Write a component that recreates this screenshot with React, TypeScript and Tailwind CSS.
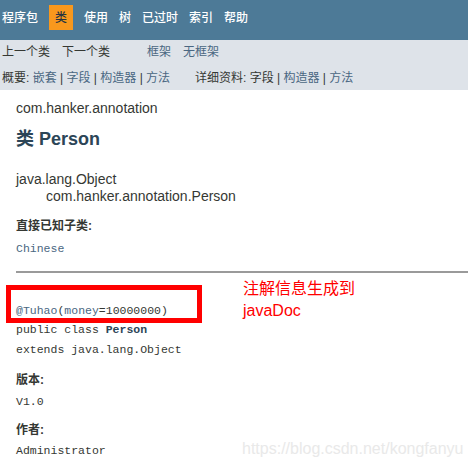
const sans = "font-['Liberation_Sans','Noto_Sans_CJK_SC',sans-serif]";
const mono = "font-['Liberation_Mono','Noto_Sans_CJK_SC',monospace]";

function TopNav() {
  const items = ['程序包', '类', '使用', '树', '已过时', '索引', '帮助'];
  return (
    <div className="flex h-[40px] items-start bg-[#4d7a97] pl-[2px] pt-[5px] text-[12px] font-medium text-white">
      {items.map((it) =>
        it === '类' ? (
          <span key={it} className="mr-[11px] flex h-[25px] w-[24px] items-center justify-center bg-[#f8981d] text-[#253441]">
            {it}
          </span>
        ) : (
          <span key={it} className="mr-[11px] flex h-[25px] items-center">
            {it}
          </span>
        )
      )}
    </div>
  );
}

function SubNav() {
  return (
    <div className="h-[50px] bg-[#dee3e9] pl-[2px] pt-[4px] text-[12px] leading-[16px] text-[#353833]">
      <div className="flex">
        <span className="mr-[12px]">上一个类</span>
        <span className="mr-[37px]">下一个类</span>
        <span className="mr-[12px] text-[#4a6782]">框架</span>
        <span className="text-[#4a6782]">无框架</span>
      </div>
      <div className="mt-[10px] flex">
        <span className="w-[193px]">
          概要: <span className="text-[#4a6782]">嵌套</span> | <span className="text-[#4a6782]">字段</span> |{' '}
          <span className="text-[#4a6782]">构造器</span> | <span className="text-[#4a6782]">方法</span>
        </span>
        <span>
          详细资料: 字段 | <span className="text-[#4a6782]">构造器</span> | <span className="text-[#4a6782]">方法</span>
        </span>
      </div>
    </div>
  );
}

export default function App() {
  return (
    <div className={`relative h-[467px] w-[468px] overflow-hidden bg-white ${sans}`}>
      <TopNav />
      <SubNav />
      <div className="pl-[16px] text-[#353833]">
        <div className="pt-[9px] text-[14px] leading-[18px]">com.hanker.annotation</div>
        <div className="pt-[11px] text-[18px] font-bold leading-[22px] text-[#2c4557]">类 Person</div>
        <div className="pt-[21px] text-[14px] leading-[17px]">java.lang.Object</div>
        <div className="pl-[30px] text-[14px] leading-[17px]">com.hanker.annotation.Person</div>
        <div className="pt-[13px] text-[12px] font-bold leading-[16px]">直接已知子类:</div>
        <div className={`pt-[7px] text-[11.5px] leading-[16px] text-[#4a6782] ${mono}`}>Chinese</div>
      </div>
      <div className="ml-[16px] mt-[14px] h-[2px] bg-[#9a9a9a]" />
      <div className={`pl-[16px] pt-[28px] text-[11.5px] text-[#353833] ${mono}`}>
        <div className="leading-[19px]">
          <span className="text-[#4a6782]">@Tuhao</span>(<span className="text-[#4a6782]">money</span>=10000000)
        </div>
        <div className="leading-[20px]">
          public class <b className="text-[#2c4557]">Person</b>
        </div>
        <div className="leading-[19px]">extends java.lang.Object</div>
      </div>
      <div className="pl-[16px] text-[#353833]">
        <div className={`pt-[13px] text-[12px] font-bold leading-[16px] ${sans}`}>版本:</div>
        <div className={`pt-[6px] text-[11.5px] leading-[16px] ${mono}`}>V1.0</div>
        <div className={`pt-[12px] text-[12px] font-bold leading-[16px] ${sans}`}>作者:</div>
        <div className={`pt-[5px] text-[11.5px] leading-[16px] ${mono}`}>Administrator</div>
      </div>
      <div className="absolute left-[6px] top-[285px] h-[38px] w-[196px] border-[5px] border-[#ff0000]" />
      <div className="absolute left-[243px] top-[278px] text-[16px] leading-[22px] text-[#ff0000]">
        <div>注解信息生成到</div>
        <div>javaDoc</div>
      </div>
      <div className="absolute left-[242px] top-[439px] text-[16px] leading-[20px] text-[#e9e9e9]">https://blog.csdn.net/kongfanyu</div>
    </div>
  );
}
